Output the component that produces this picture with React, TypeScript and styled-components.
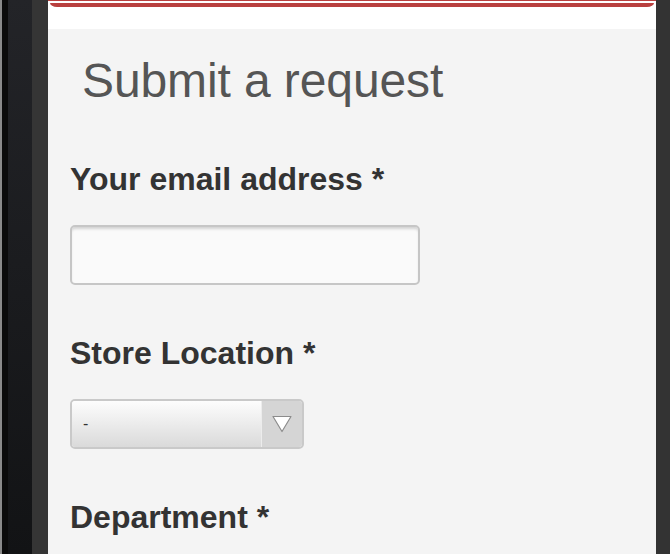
import React from "react";
import styled, { createGlobalStyle } from "styled-components";

const Global = createGlobalStyle`
  html, body { margin: 0; padding: 0; height: 100%; }
  body { font-family: "Liberation Sans", Arial, sans-serif; background: #333; overflow: hidden; }
  #root { height: 100%; }
`;

const Frame = styled.div`
  display: flex;
  height: 554px;
  width: 670px;
  overflow: hidden;
`;

const LeftBezel = styled.div`
  width: 48px;
  flex: none;
  background:
    linear-gradient(to right, #8a8a8a 0 2px, #0b0b0b 2px 8px, transparent 8px 32px, #353535 32px 48px),
    linear-gradient(to bottom, #232428, #121315);
`;

const RightBezel = styled.div`
  width: 14px;
  flex: none;
  background: #333333;
`;

const Screen = styled.div`
  flex: 1;
  display: flex;
  flex-direction: column;
  min-width: 0;
  overflow: hidden;
`;

const Header = styled.header`
  height: 29px;
  flex: none;
  background: #ffffff;
  display: flex;
  flex-direction: column;
`;

const TopLine = styled.div`
  height: 1px;
  background: #b9403f;
`;

const RedBar = styled.div`
  height: 4px;
  margin: 2px 2px 0;
  background: #b9403f;
  border-radius: 0 0 7px 7px / 0 0 4px 4px;
`;

const Panel = styled.main`
  flex: 1;
  background: #f4f4f4;
  padding: 23px 22px 0;
`;

const Title = styled.h1`
  margin: 0 0 49px 12px;
  font-size: 48px;
  line-height: 57.6px;
  font-weight: normal;
  color: #555555;
  letter-spacing: -0.1px;
`;

const Field = styled.div`
  margin-bottom: 48px;
`;

const Label = styled.label`
  display: block;
  font-size: 32px;
  line-height: 40px;
  font-weight: bold;
  color: #333333;
  margin-bottom: 26px;
`;

const TextInput = styled.input`
  display: block;
  box-sizing: border-box;
  width: 350px;
  height: 60px;
  border: 2px solid #c6c6c6;
  border-radius: 5px;
  background: #fafafa;
  box-shadow: inset 0 3px 3px -1px rgba(0, 0, 0, 0.16);
  padding: 0 12px;
  font-size: 20px;
  font-family: inherit;
  outline: none;
`;

const SelectBox = styled.div`
  box-sizing: border-box;
  width: 234px;
  height: 50px;
  border: 2px solid #c9c9c9;
  border-radius: 5px;
  display: flex;
  overflow: hidden;
`;

const SelectValue = styled.div`
  flex: 1;
  display: flex;
  align-items: center;
  padding-left: 11px;
  font-size: 16px;
  color: #333;
  background: linear-gradient(to bottom, #fdfdfd, #dadada);
`;

const ArrowCell = styled.div`
  width: 40px;
  flex: none;
  display: flex;
  align-items: center;
  justify-content: center;
  background: #d5d5d5;
  border-left: 1px solid #ececec;
`;

const Arrow = () => (
  <svg width="20" height="18" viewBox="0 0 20 18">
    <path d="M1 1.5 L19 1.5 L10 16.5 Z" fill="#ffffff" stroke="#8c8c8c" strokeWidth="1.2" strokeLinejoin="round" />
  </svg>
);

export default function App() {
  return (
    <>
      <Global />
      <Frame>
        <LeftBezel />
        <Screen>
          <Header>
            <TopLine />
            <RedBar />
          </Header>
          <Panel>
            <Title>Submit a request</Title>
            <Field>
              <Label>Your email address *</Label>
              <TextInput type="email" />
            </Field>
            <Field>
              <Label>Store Location *</Label>
              <SelectBox>
                <SelectValue>-</SelectValue>
                <ArrowCell>
                  <Arrow />
                </ArrowCell>
              </SelectBox>
            </Field>
            <Field>
              <Label>Department *</Label>
            </Field>
          </Panel>
        </Screen>
        <RightBezel />
      </Frame>
    </>
  );
}
